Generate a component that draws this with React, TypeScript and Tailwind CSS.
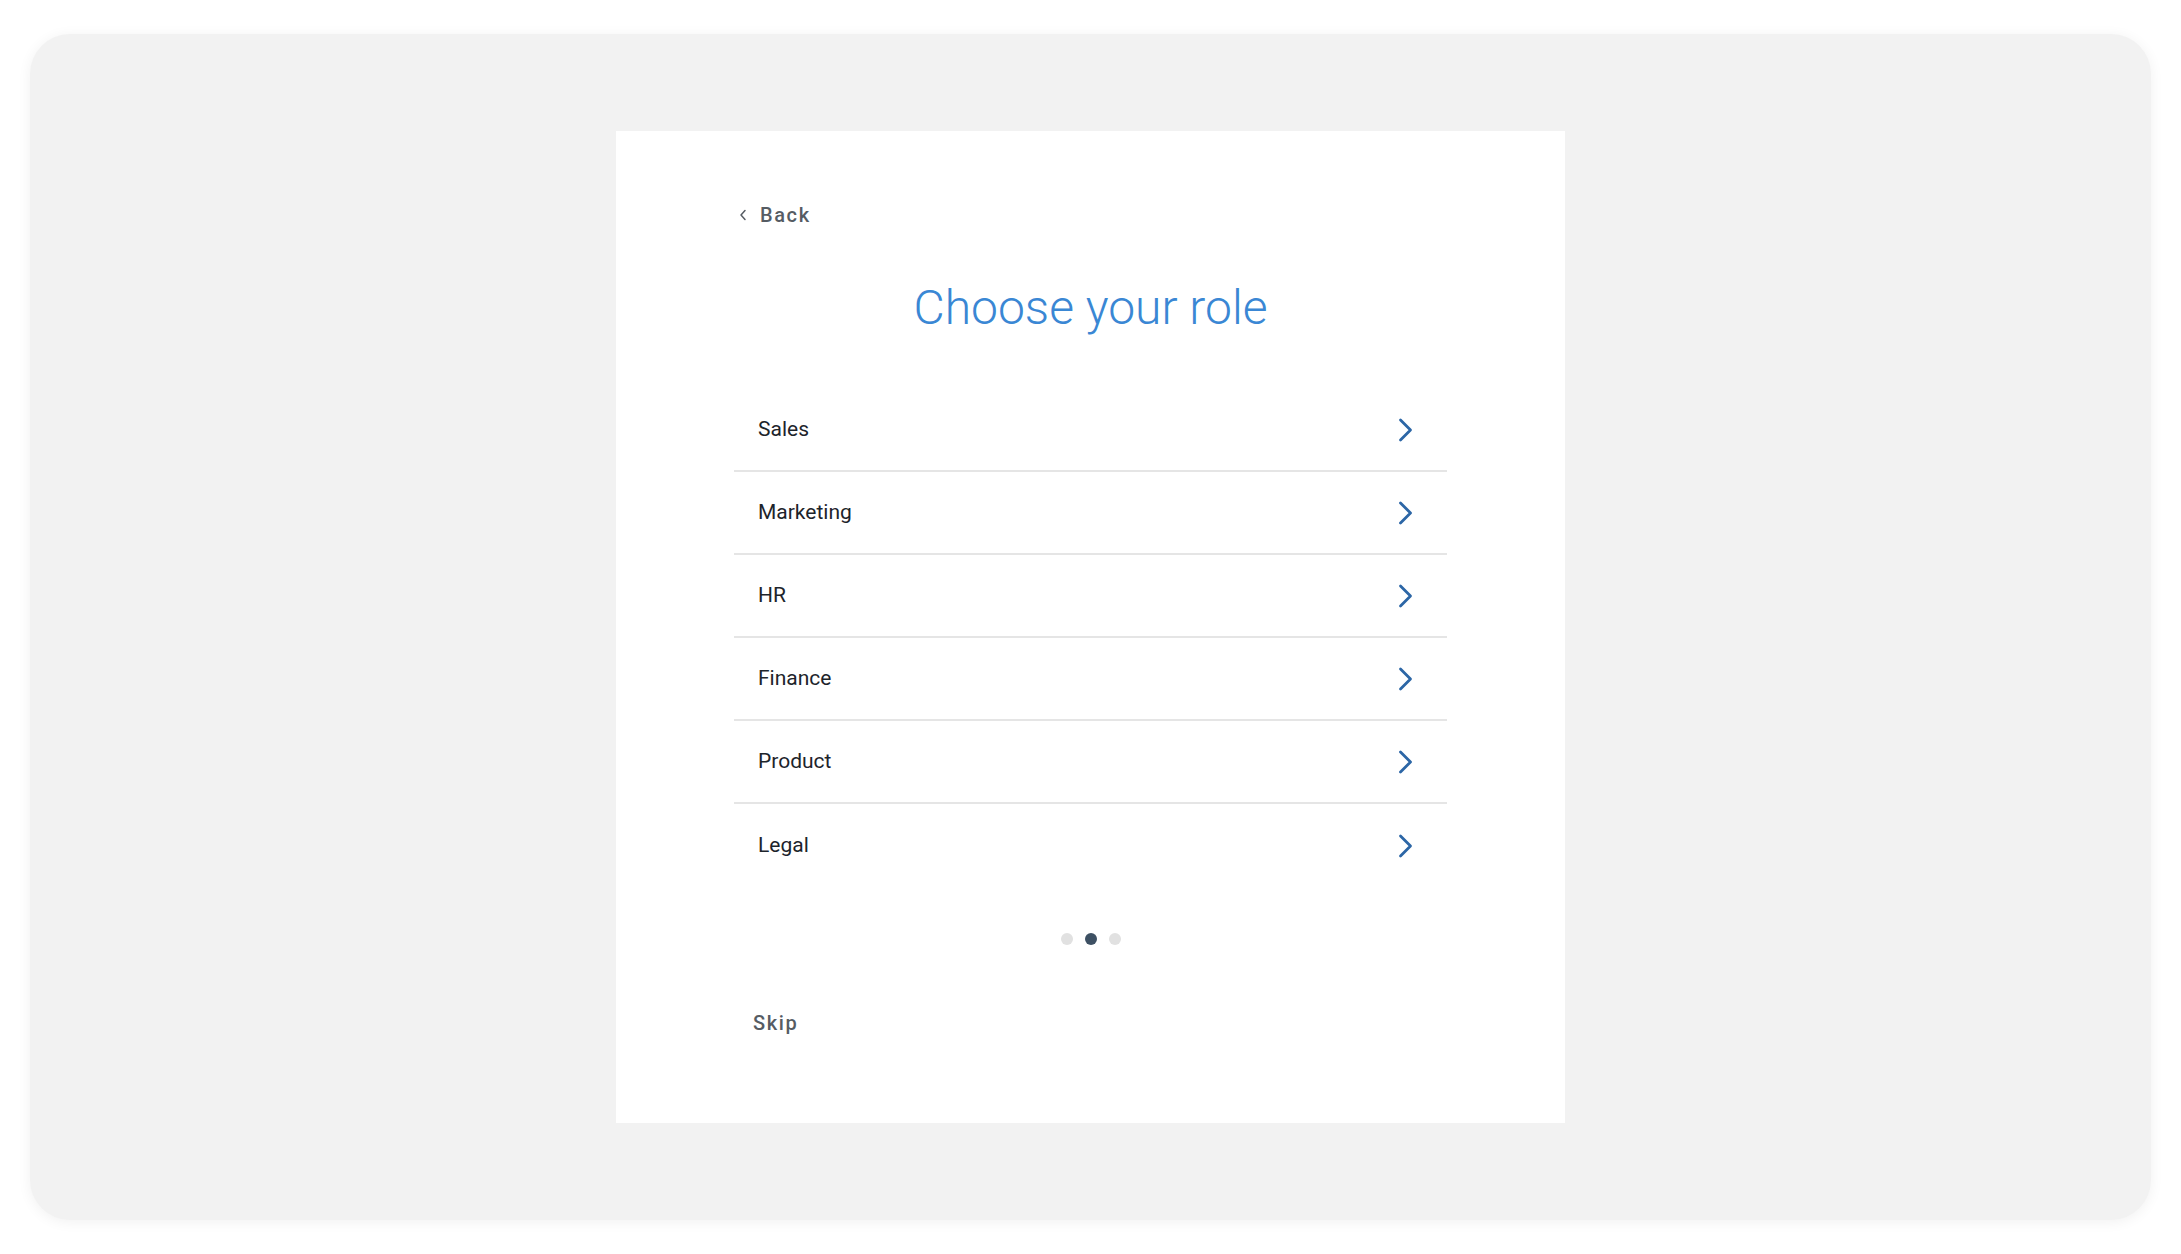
import React from "react";

const ROLES = ["Sales", "Marketing", "HR", "Finance", "Product", "Legal"];

function Chevron() {
  return (
    <svg width="15" height="24" viewBox="0 0 15 24" fill="none" className="shrink-0">
      <path d="M2.5 2 L12.5 12 L2.5 22" stroke="#2c66a6" strokeWidth="2.8" strokeLinecap="round" strokeLinejoin="round" />
    </svg>
  );
}

export default function App() {
  return (
    <div className="w-full h-[1254px] bg-white pt-[34px] pb-[34px] pl-[30px] pr-[30px] font-['Roboto',sans-serif]">
      <div className="w-full h-full rounded-[40px] bg-[#f2f2f2] shadow-[0_2px_14px_rgba(0,0,0,0.06)] flex items-center justify-center">
        <div className="w-[949px] h-[992px] bg-white flex flex-col items-center pt-[73px]">
          <div className="w-[713px] flex flex-col">
            {/* back */}
            <button className="h-[22px] flex items-center gap-[13px] pl-[5px] text-[#565c63]">
              <svg width="8" height="12" viewBox="0 0 8 12" fill="none">
                <path d="M6 1.5 L2 6 L6 10.5" stroke="#565c63" strokeWidth="1.5" strokeLinecap="round" strokeLinejoin="round" />
              </svg>
              <span className="text-[20px] leading-[22px] font-medium tracking-[0.08em]">Back</span>
            </button>

            <h1 className="mt-[54px] h-[56px] leading-[56px] text-center text-[48px] font-light text-[#3a87d4]">
              Choose your role
            </h1>

            <ul className="mt-[53px] flex flex-col">
              {ROLES.map((role, i) => (
                <li
                  key={role}
                  className={`h-[83px] flex items-center justify-between pl-[24px] pr-[34px] cursor-pointer ${
                    i < ROLES.length - 1 ? "border-b-2 border-[#e5e5e5]" : ""
                  }`}
                >
                  <span className="text-[21px] text-[#1d242b]">{role}</span>
                  <Chevron />
                </li>
              ))}
            </ul>

            <div className="mt-[46px] flex items-center justify-center gap-[12px]">
              <span className="w-[12px] h-[12px] rounded-full bg-[#e1e1e1]" />
              <span className="w-[12px] h-[12px] rounded-full bg-[#3d5063]" />
              <span className="w-[12px] h-[12px] rounded-full bg-[#e1e1e1]" />
            </div>

            <button className="mt-[67px] self-start h-[22px] pl-[19px] text-[20px] leading-[22px] font-medium tracking-[0.08em] text-[#565c63]">
              Skip
            </button>
          </div>
        </div>
      </div>
    </div>
  );
}
